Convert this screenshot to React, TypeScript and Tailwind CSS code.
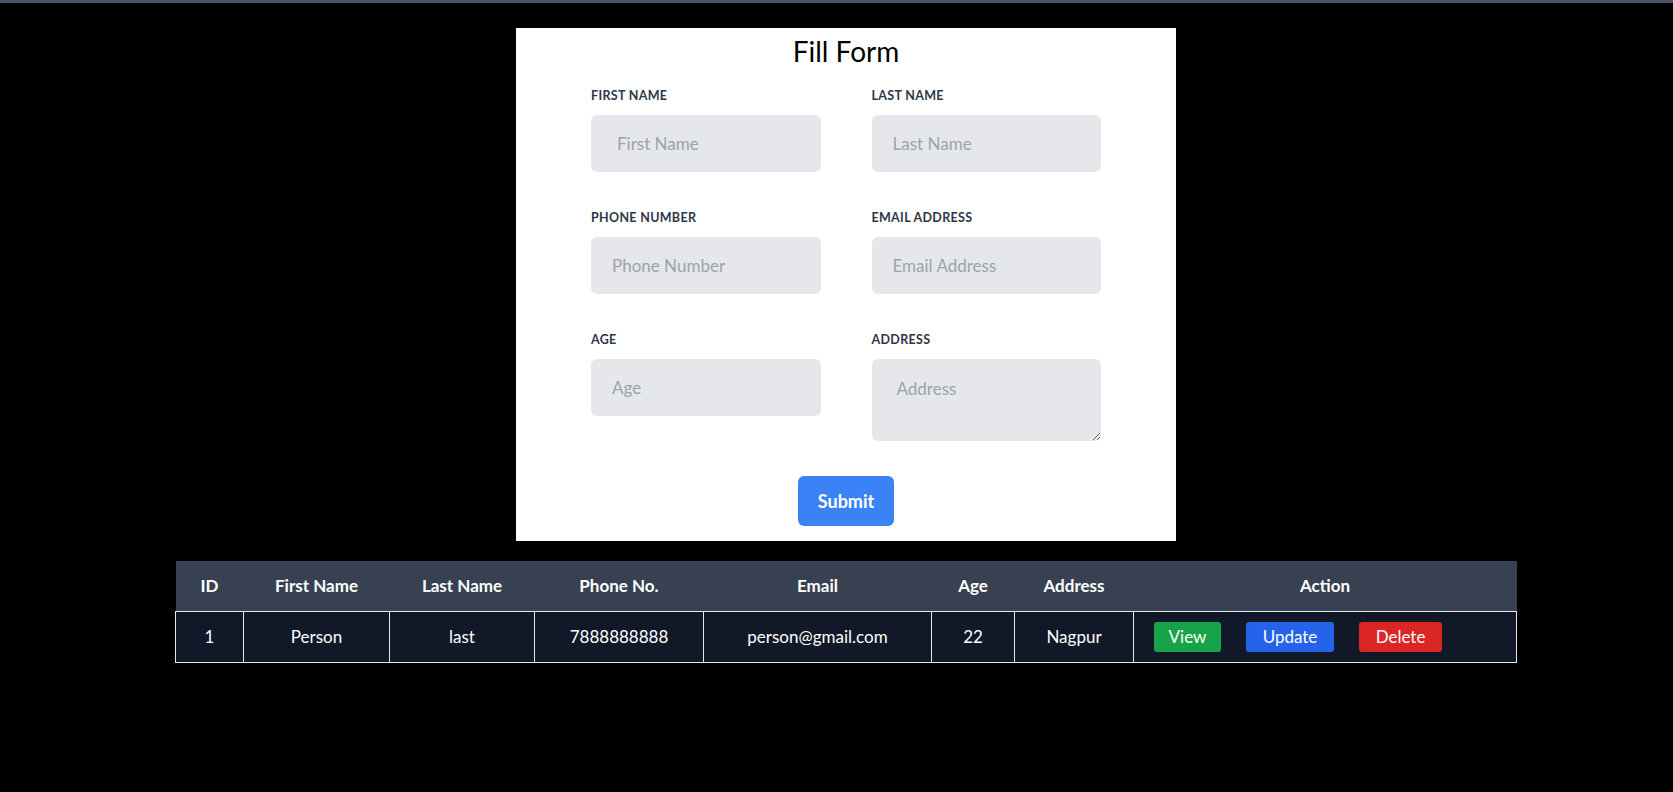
import React from "react";

const fields = [
  { label: "FIRST NAME", ph: "First Name", pl: "pl-[26px]" },
  { label: "LAST NAME", ph: "Last Name", pl: "pl-[21px]" },
  { label: "PHONE NUMBER", ph: "Phone Number", pl: "pl-[21px]" },
  { label: "EMAIL ADDRESS", ph: "Email Address", pl: "pl-[21px]" },
  { label: "AGE", ph: "Age", pl: "pl-[21px]" },
];

const cols = [
  { name: "ID", w: "w-[68px]", v: "1" },
  { name: "First Name", w: "w-[146px]", v: "Person" },
  { name: "Last Name", w: "w-[145px]", v: "last" },
  { name: "Phone No.", w: "w-[169px]", v: "7888888888" },
  { name: "Email", w: "w-[228px]", v: "person@gmail.com" },
  { name: "Age", w: "w-[83px]", v: "22" },
  { name: "Address", w: "w-[119px]", v: "Nagpur" },
];

export default function App() {
  return (
    <div
      className="min-h-screen bg-black"
      style={{ fontFamily: "Lato, 'Noto Sans', sans-serif" }}
    >
      <div className="h-[3px] bg-[#475569]" />
      <div className="flex flex-col items-center pl-[19px] pt-[25px]">
        <form className="w-[660px] bg-white px-[75px] pt-[5px] pb-[15px]">
          <h1 className="text-center text-[28px] leading-[36px] text-black font-normal">
            Fill Form
          </h1>
          <div className="mt-[19px] grid grid-cols-2 gap-x-[51px] gap-y-[38px]">
            {fields.map((f) => (
              <div key={f.label} className="flex flex-col">
                <label className="mb-[11px] text-[12.5px] leading-4 font-bold tracking-wide text-[#2d3748]">
                  {f.label}
                </label>
                <input
                  placeholder={f.ph}
                  className={`h-[57px] w-full rounded-md bg-[#e5e7eb] ${f.pl} pr-4 text-[17px] text-gray-700 placeholder:text-[#9ca3af] outline-none`}
                />
              </div>
            ))}
            <div className="flex flex-col">
              <label className="mb-[11px] text-[12.5px] leading-4 font-bold tracking-wide text-[#2d3748]">
                ADDRESS
              </label>
              <textarea
                placeholder="Address"
                className="h-[82px] w-full rounded-md bg-[#e5e7eb] pl-[25px] pr-4 pt-[16px] pb-[12px] text-[17px] leading-7 text-gray-700 placeholder:text-[#9ca3af] outline-none"
              />
            </div>
          </div>
          <div className="mt-[35px] flex justify-center">
            <button
              type="button"
              className="h-[50px] w-[96px] rounded-md bg-[#3b82f6] text-lg font-bold text-white"
            >
              Submit
            </button>
          </div>
        </form>

        <table className="mt-[20px] w-[1342px] table-fixed border-collapse text-white">
          <thead>
            <tr className="h-[50px] bg-[#374151]">
              {cols.map((c) => (
                <th key={c.name} className={`${c.w} text-center text-[17px] font-bold`}>
                  {c.name}
                </th>
              ))}
              <th className="text-center text-[17px] font-bold">Action</th>
            </tr>
          </thead>
          <tbody>
            <tr className="h-[51px] bg-[#111827]">
              {cols.map((c) => (
                <td
                  key={c.name}
                  className="border border-[#e5e7eb] text-center text-[17px]"
                >
                  {c.v}
                </td>
              ))}
              <td className="border border-[#e5e7eb]">
                <div className="flex items-center gap-[25px] pl-[20px]">
                  <button className="h-[30px] w-[67px] rounded-[3px] bg-[#16a34a] text-[17px] text-white">
                    View
                  </button>
                  <button className="h-[30px] w-[88px] rounded-[3px] bg-[#2563eb] text-[17px] text-white">
                    Update
                  </button>
                  <button className="h-[30px] w-[83px] rounded-[3px] bg-[#dc2626] text-[17px] text-white">
                    Delete
                  </button>
                </div>
              </td>
            </tr>
          </tbody>
        </table>
      </div>
    </div>
  );
}
